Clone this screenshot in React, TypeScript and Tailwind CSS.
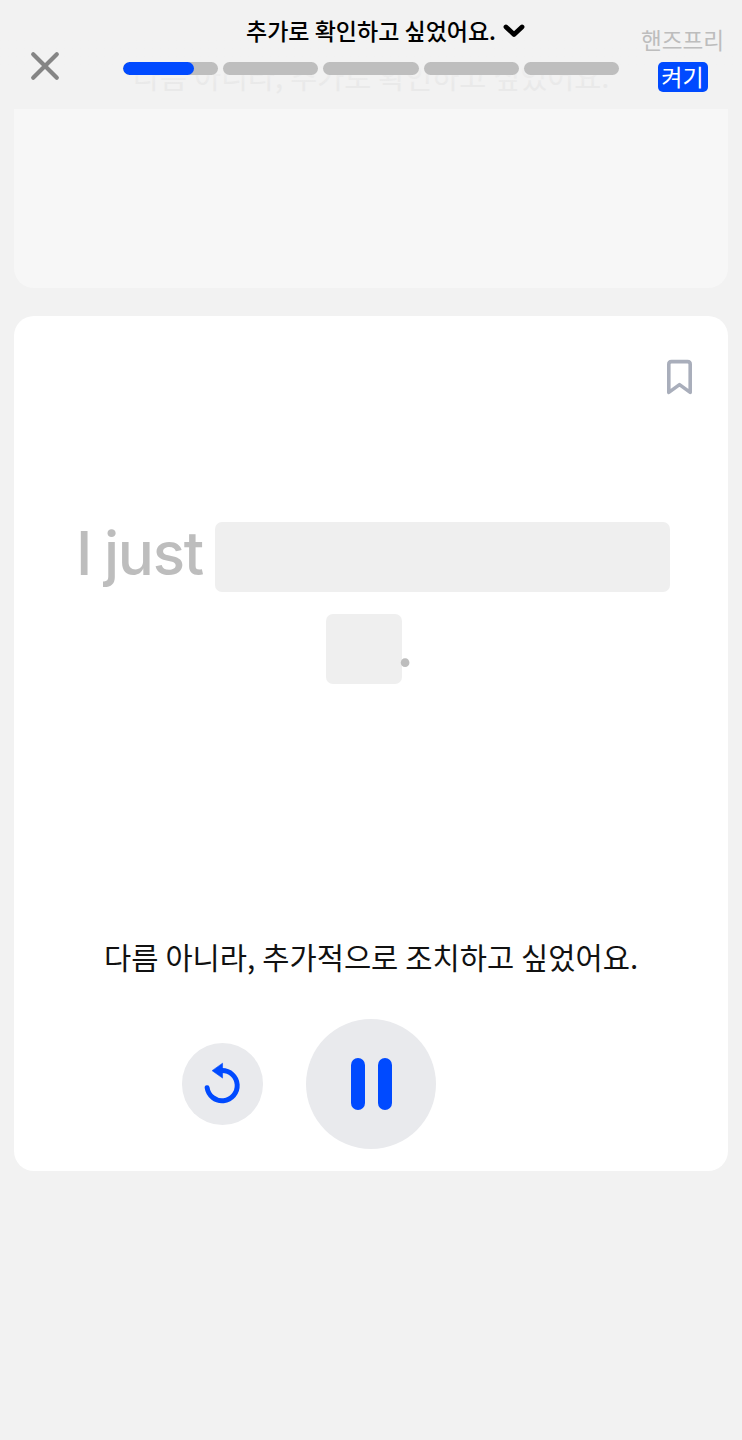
const SEGMENTS = [75, 0, 0, 0, 0];

function Header() {
  return (
    <header className="relative h-[109px] w-full shrink-0 overflow-hidden bg-[#f2f2f2]">
      <p className="absolute left-[133px] top-[53px] whitespace-nowrap text-[29.4px] leading-[44px] text-[#e9e9e9] [word-spacing:0.3px]">
        다름 아니라, 추가로 확인하고 싶었어요.
      </p>
      <div className="absolute inset-x-0 top-0 h-[84px] bg-linear-to-b from-[#f2f2f2] from-75% to-transparent" />
      <div className="relative flex h-full items-start">
        <button aria-label="닫기" className="ml-[30px] mt-[51px] h-[30px] w-[30px] shrink-0">
          <svg viewBox="0 0 30 30" className="h-[30px] w-[30px]" fill="none" stroke="#858585" strokeWidth="4.2" strokeLinecap="round">
            <path d="M3.2 3.2 26.8 26.8M26.8 3.2 3.2 26.8" />
          </svg>
        </button>
        <div className="ml-[63px] w-[496px] shrink-0">
          <button className="ml-[123px] mt-[12px] flex h-[36px] items-center whitespace-nowrap text-[23px] font-medium leading-[36px] text-black">
            <span>추가로 확인하고 싶었어요.</span>
            <svg viewBox="0 0 22 14" className="ml-[7px] mt-[2px] h-[14px] w-[22px]" fill="none" stroke="#000" strokeWidth="4.8" strokeLinecap="round" strokeLinejoin="round">
              <path d="M3 3 11 10.4 19 3" />
            </svg>
          </button>
          <div className="mt-[14px] flex gap-[5px]">
            {SEGMENTS.map((value, i) => (
              <div key={i} className="h-[13px] flex-1 overflow-hidden rounded-full bg-[#bebebe]">
                <div className="h-full rounded-full bg-[#004aff]" style={{ width: `${value}%` }} />
              </div>
            ))}
          </div>
        </div>
        <div className="ml-[21.5px] mt-[25.5px] flex w-[84px] shrink-0 flex-col items-center">
          <span className="whitespace-nowrap text-[22.6px] leading-[28px] text-[#bdbdbd]">핸즈프리</span>
          <button className="mt-[8.5px] flex h-[30px] w-[50px] items-center justify-center whitespace-nowrap rounded-[5px] bg-[#004aff] pb-[2px] text-[23px] leading-[28px] text-white">
            켜기
          </button>
        </div>
      </div>
    </header>
  );
}

export default function App() {
  return (
    <main className="flex h-[1440px] w-[742px] flex-col overflow-hidden bg-[#f2f2f2] font-['Noto_Sans_CJK_KR',sans-serif]">
      <Header />
      <div className="mx-[14px] h-[179px] shrink-0 rounded-b-[20px] bg-[#f7f7f7]" />
      <section className="mx-[14px] mt-[28px] flex h-[854.5px] shrink-0 flex-col rounded-[20px] bg-white">
        <button aria-label="북마크" className="ml-[652px] mt-[43px] h-[36px] w-[28px] shrink-0">
          <svg viewBox="0 0 28 36" className="h-[36px] w-[28px]" fill="none" stroke="#a9aebb" strokeWidth="3.6" strokeLinejoin="round">
            <path d="M2.8 33.4V5.3Q2.8 2.6 5.5 2.6H21.5Q24.2 2.6 24.2 5.3V33.4L13.5 25.6Z" />
          </svg>
        </button>
        <div className="mt-[127px] flex h-[69.5px] shrink-0 font-['Inter',sans-serif] text-[60px] font-medium leading-[62px] text-[#bdbdbd]">
          <span className="ml-[62px] w-[139px] shrink-0 whitespace-nowrap tracking-[-1.2px] [word-spacing:-2px]">I just</span>
          <span className="h-[69.5px] w-[455px] shrink-0 rounded-[7px] bg-[#efefef]" />
        </div>
        <div className="mt-[22.5px] flex h-[69.5px] shrink-0 items-start pl-[312px]">
          <span className="h-[69.5px] w-[76px] rounded-[7px] bg-[#efefef]" />
          <span className="-ml-[6px] font-['Inter',sans-serif] text-[60px] font-medium leading-[62px] text-[#bdbdbd]">.</span>
        </div>
        <p className="ml-[90px] mt-[251.5px] h-[44px] shrink-0 whitespace-nowrap text-[29.6px] leading-[44px] text-[#111] [word-spacing:0.3px]">
          다름 아니라, 추가적으로 조치하고 싶었어요.
        </p>
        <div className="ml-[167.5px] mt-[40px] flex h-[130px] items-center gap-[43px]">
          <button aria-label="다시 듣기" className="h-[81.5px] w-[81.5px] rounded-full bg-[#e9eaed]">
            <svg viewBox="0 0 82 82" className="h-[81.5px] w-[81.5px]" fill="none">
              <path d="M25.3 45A15.2 15.2 0 1 0 40 27.7" stroke="#004aff" strokeWidth="5" strokeLinecap="round" />
              <path d="M30.3 27.8 40.8 20.3V35.3Z" fill="#004aff" stroke="#004aff" strokeWidth="0.6" strokeLinejoin="round" />
            </svg>
          </button>
          <button aria-label="일시정지" className="flex h-[130px] w-[130px] items-center justify-center gap-[13px] rounded-full bg-[#e9eaed]">
            <span className="h-[52px] w-[14px] rounded-full bg-[#004aff]" />
            <span className="h-[52px] w-[14px] rounded-full bg-[#004aff]" />
          </button>
        </div>
      </section>
    </main>
  );
}
